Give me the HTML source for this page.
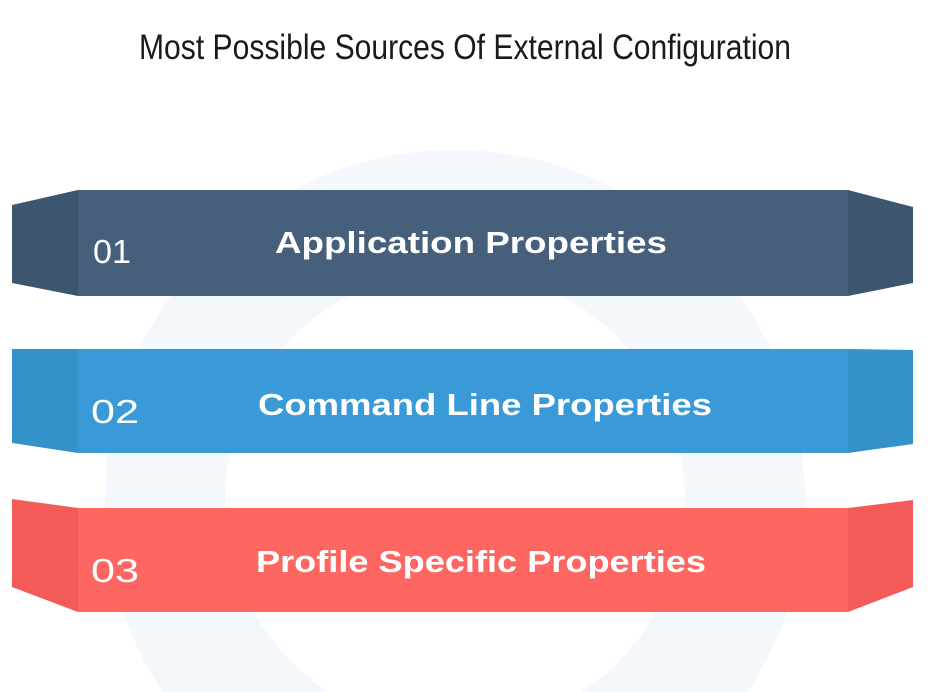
<!DOCTYPE html>
<html><head><meta charset="utf-8"><style>
html,body{margin:0;padding:0;width:939px;height:692px;overflow:hidden;background:#fff;}
svg{display:block}
</style></head><body>
<svg width="939" height="692" viewBox="0 0 939 692" xmlns="http://www.w3.org/2000/svg">
<rect width="939" height="692" fill="#fff"/>
<circle cx="455" cy="500" r="290" fill="none" stroke="#f4f8fd" stroke-width="120"/>
<text x="465" y="59" text-anchor="middle" font-family="Liberation Sans Narrow, Liberation Sans, sans-serif" font-size="35" fill="#1a1a1a" textLength="652" lengthAdjust="spacingAndGlyphs">Most Possible Sources Of External Configuration</text>

<polygon points="12,205 78,190 78,296 12,283" fill="#3d566f"/>
<rect x="78" y="190" width="770" height="106" fill="#465f7b"/>
<polygon points="848,190 913,207 913,283 848,296" fill="#3d566f"/>
<text x="93" y="263" font-family="Liberation Sans, sans-serif" font-size="33" fill="#fff" textLength="38" lengthAdjust="spacingAndGlyphs">01</text>
<text x="471" y="253" text-anchor="middle" font-family="Liberation Sans, sans-serif" font-weight="bold" font-size="31" fill="#fff" textLength="392" lengthAdjust="spacingAndGlyphs">Application Properties</text>

<polygon points="12,349 78,349 78,453 12,443" fill="#3592c9"/>
<rect x="78" y="349" width="770" height="104" fill="#3a9ad8"/>
<polygon points="848,349 913,350 913,444 848,453" fill="#3592c9"/>
<text x="91" y="423" font-family="Liberation Sans, sans-serif" font-size="33" fill="#fff" textLength="48" lengthAdjust="spacingAndGlyphs">02</text>
<text x="485" y="415" text-anchor="middle" font-family="Liberation Sans, sans-serif" font-weight="bold" font-size="31" fill="#fff" textLength="454" lengthAdjust="spacingAndGlyphs">Command Line Properties</text>

<polygon points="12,499 78,508 78,612 12,587" fill="#f45b58"/>
<rect x="78" y="508" width="770" height="104" fill="#fe6661"/>
<polygon points="848,508 913,500 913,587 848,612" fill="#f45b58"/>
<text x="91" y="582" font-family="Liberation Sans, sans-serif" font-size="33" fill="#fff" textLength="48" lengthAdjust="spacingAndGlyphs">03</text>
<text x="481" y="572" text-anchor="middle" font-family="Liberation Sans, sans-serif" font-weight="bold" font-size="31" fill="#fff" textLength="450" lengthAdjust="spacingAndGlyphs">Profile Specific Properties</text>
</svg>
</body></html>
